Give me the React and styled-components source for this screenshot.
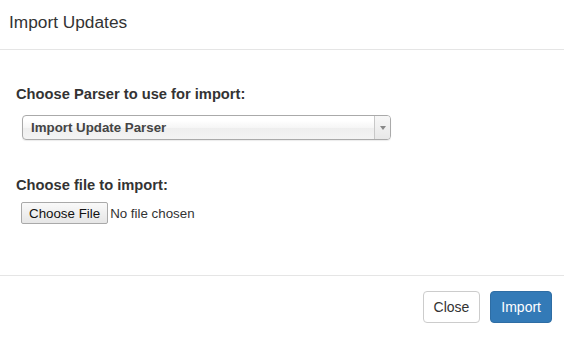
import React from 'react';
import styled, { createGlobalStyle } from 'styled-components';

const GlobalStyle = createGlobalStyle`
  html, body {
    margin: 0;
    padding: 0;
    background: #fff;
  }
  body {
    font-family: "Liberation Sans", Arial, sans-serif;
    color: #333;
  }
`;

const Modal = styled.div`
  width: 564px;
  height: 349px;
  background: #fff;
  display: flex;
  flex-direction: column;
`;

const Header = styled.div`
  padding: 12px 9px 17px;
  border-bottom: 1px solid #e5e5e5;
`;

const Title = styled.h4`
  margin: 0;
  font-size: 17.3px;
  font-weight: normal;
  line-height: 20px;
  color: #333;
`;

const Body = styled.div`
  padding: 34px 16px 0;
  height: 226px;
  box-sizing: border-box;
  border-bottom: 1px solid #e5e5e5;
`;

const Group = styled.div`
  margin-bottom: ${p => p.$gap || 0}px;
`;

const Label = styled.label`
  display: block;
  font-size: 14.7px;
  font-weight: bold;
  line-height: 20px;
  color: #333;
  margin-bottom: ${p => p.$gap || 0}px;
`;

const Select = styled.div`
  position: relative;
  margin-left: 6px;
  width: 369px;
  height: 25px;
  box-sizing: border-box;
  border: 1px solid #aaa;
  border-radius: 4px;
  background: linear-gradient(#fff 20%, #f6f6f6 50%, #eee 52%, #f4f4f4 100%);
  box-shadow: 0 1px 1px rgba(0, 0, 0, 0.08);
  display: flex;
  overflow: hidden;
`;

const SelectText = styled.span`
  flex: 1;
  padding: 3px 0 2px 8px;
  font-size: 13.3px;
  font-weight: bold;
  line-height: 18px;
  color: #444;
`;

const Arrow = styled.span`
  width: 15px;
  border-left: 1px solid #c8c8c8;
  background: linear-gradient(#f7f7f7, #e8e8e8);
  display: flex;
  align-items: center;
  justify-content: center;

  &::after {
    content: '';
    border-left: 3px solid transparent;
    border-right: 3px solid transparent;
    border-top: 4px solid #888;
    margin-top: 1px;
  }
`;

const FileInput = styled.input`
  margin: 0 0 0 5px;
  font-family: "Liberation Sans", Arial, sans-serif;
  font-size: 13.33px;
  color: #333;

  &::file-selector-button {
    font-family: "Liberation Sans", Arial, sans-serif;
    font-size: 13.33px;
    color: #111;
    height: 22px;
    padding: 0 7px;
    margin-right: 2px;
    border: 1px solid #a9a9a9;
    border-radius: 2px;
    background: linear-gradient(#f9f9f9, #e6e6e6);
  }
`;

const Footer = styled.div`
  padding: 15px 12px 0;
  display: flex;
  justify-content: flex-end;
  gap: 10px;
`;

const Button = styled.button`
  height: 32px;
  padding: 0 10px;
  font-family: "Liberation Sans", Arial, sans-serif;
  font-size: 14px;
  line-height: 20px;
  border-radius: 4px;
  border: 1px solid ${p => (p.$primary ? '#2e6da4' : '#ccc')};
  background: ${p => (p.$primary ? '#337ab7' : '#fff')};
  color: ${p => (p.$primary ? '#fff' : '#333')};
  cursor: pointer;
`;

export default function App() {
  return (
    <>
      <GlobalStyle />
      <Modal>
        <Header>
          <Title>Import Updates</Title>
        </Header>
        <Body>
          <Group $gap={35}>
            <Label $gap={11}>Choose Parser to use for import:</Label>
            <Select>
              <SelectText>Import Update Parser</SelectText>
              <Arrow />
            </Select>
          </Group>
          <Group>
            <Label $gap={7}>Choose file to import:</Label>
            <FileInput type="file" />
          </Group>
        </Body>
        <Footer>
          <Button>Close</Button>
          <Button $primary>Import</Button>
        </Footer>
      </Modal>
    </>
  );
}
